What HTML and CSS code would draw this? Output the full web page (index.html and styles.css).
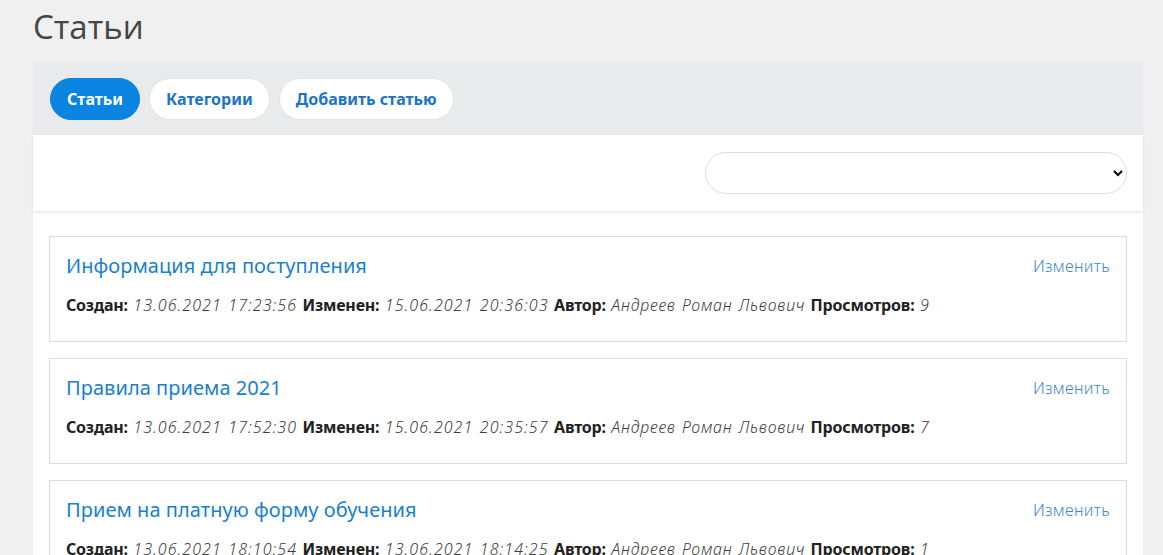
FILE: index.html
```html
<!DOCTYPE html>
<html lang="ru">
<head>
<meta charset="utf-8">
<title>Статьи</title>
<link rel="stylesheet" href="styles.css">
</head>
<body>
<div class="page">
  <h1 class="page-title">Статьи</h1>
  <div class="panel">
    <div class="panel-tabs">
      <a class="pill pill-active" href="#">Статьи</a>
      <a class="pill" href="#">Категории</a>
      <a class="pill" href="#">Добавить статью</a>
    </div>
    <div class="panel-filter">
      <select class="filter-select"><option></option></select>
    </div>
    <div class="panel-list">
      <div class="card">
        <div class="card-head">
          <a class="card-title" href="#">Информация для поступления</a>
          <a class="card-edit" href="#">Изменить</a>
        </div>
        <div class="card-meta"><b>Создан:</b> <i class="date">13.06.2021 17:23:56</i> <b>Изменен:</b> <i class="date">15.06.2021 20:36:03</i> <b>Автор:</b> <i class="name">Андреев Роман Львович</i> <b>Просмотров:</b> <i class="date">9</i></div>
      </div>
      <div class="card">
        <div class="card-head">
          <a class="card-title" href="#">Правила приема 2021</a>
          <a class="card-edit" href="#">Изменить</a>
        </div>
        <div class="card-meta"><b>Создан:</b> <i class="date">13.06.2021 17:52:30</i> <b>Изменен:</b> <i class="date">15.06.2021 20:35:57</i> <b>Автор:</b> <i class="name">Андреев Роман Львович</i> <b>Просмотров:</b> <i class="date">7</i></div>
      </div>
      <div class="card">
        <div class="card-head">
          <a class="card-title" href="#">Прием на платную форму обучения</a>
          <a class="card-edit" href="#">Изменить</a>
        </div>
        <div class="card-meta"><b>Создан:</b> <i class="date">13.06.2021 18:10:54</i> <b>Изменен:</b> <i class="date">13.06.2021 18:14:25</i> <b>Автор:</b> <i class="name">Андреев Роман Львович</i> <b>Просмотров:</b> <i class="date">1</i></div>
      </div>
    </div>
  </div>
</div>
</body>
</html>
```

FILE: styles.css
```css
html, body {
  margin: 0;
  padding: 0;
  background: #f0f0f0;
  font-family: "Noto Sans", "Open Sans", sans-serif;
  color: #222;
}
.page {
  padding: 0 20px 0 33px;
}
.page-title {
  margin: 0;
  padding: 6px 0 0 0;
  height: 56px;
  font-family: "Open Sans", sans-serif;
  font-weight: 400;
  font-size: 33px;
  line-height: 42px;
  color: #454545;
}
.panel {
  background: #fff;
}
.panel-tabs {
  background: #e9eaeb;
  padding: 16px 17px 15px;
  display: flex;
  gap: 9px;
}
.pill {
  display: flex;
  align-items: center;
  height: 42px;
  box-sizing: border-box;
  padding: 0 16px;
  border-radius: 21px;
  background: #fff;
  border: 1px solid #e2e4e6;
  color: #1b74c9;
  font-weight: 700;
  font-size: 16px;
  text-decoration: none;
}
.pill-active {
  background: #0a84e0;
  border-color: #0a84e0;
  color: #fff;
}
.panel-filter {
  display: flex;
  justify-content: flex-end;
  padding: 17px 16px;
  box-shadow: 0 2px 3px rgba(0, 0, 0, 0.09);
  position: relative;
}
.filter-select {
  width: 422px;
  height: 42px;
  border: 1px solid #dedede;
  border-radius: 21px;
  background: #fff;
  font-family: inherit;
  font-size: 16px;
  padding: 0 12px;
}
.panel-list {
  padding: 25px 16px 16px;
  display: flex;
  flex-direction: column;
  gap: 16px;
}
.card {
  border: 1px solid #dcdcdc;
  padding: 16px 16px 24px;
}
.card-head {
  display: flex;
  justify-content: space-between;
  align-items: center;
  height: 26px;
  margin-bottom: 14px;
}
.card-title {
  color: #1a7fd0;
  font-size: 20px;
  line-height: 26px;
  letter-spacing: 0.05px;
  text-decoration: none;
}
.card-edit {
  color: #3a87cf;
  font-size: 16px;
  font-weight: 300;
  letter-spacing: 0.35px;
  text-decoration: none;
}
.card-meta {
  font-size: 16px;
  line-height: 24px;
  word-spacing: 1.3px;
}
.card-meta b {
  font-weight: 700;
  color: #222;
  letter-spacing: -0.2px;
}
.card-meta i {
  font-weight: 300;
  color: #3d3d3d;
}
.card-meta .date {
  letter-spacing: 1.05px;
}
.card-meta .name {
  letter-spacing: 0.75px;
}
```
